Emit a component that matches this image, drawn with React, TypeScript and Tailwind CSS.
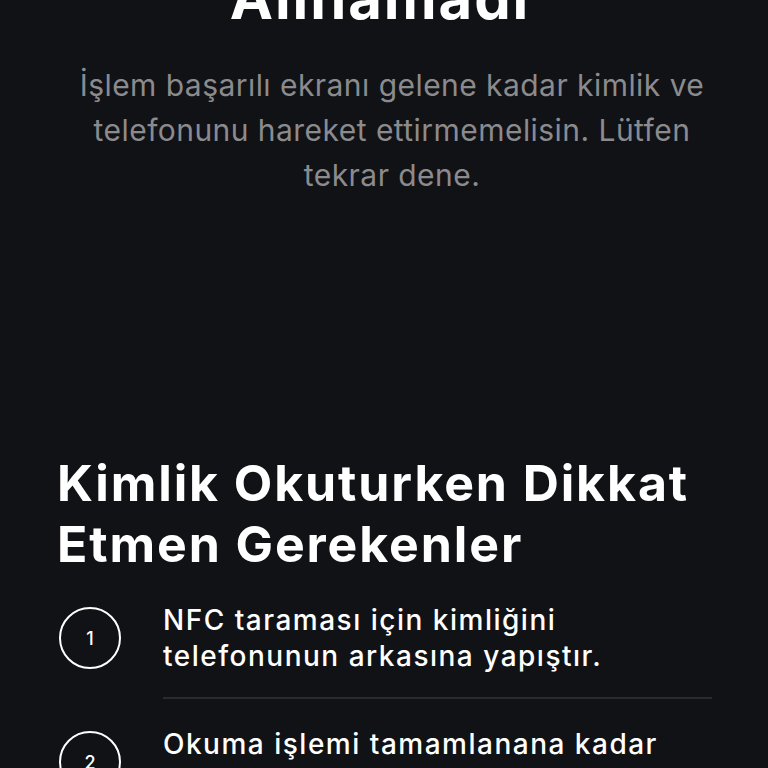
import React from "react";

const items = [
  "NFC taraması için kimliğini telefonunun arkasına yapıştır.",
  "Okuma işlemi tamamlanana kadar kimliğini sabit tut.",
  "Kimliğinin kılıfını çıkar.",
];

export default function App() {
  return (
    <div className="min-h-screen overflow-hidden bg-[#111216] font-['Inter','Noto_Sans',sans-serif] text-white">
      <div className="pl-[48px] pr-[56px]">
        <h1 className="-mt-[35px] text-center text-[58px] font-bold leading-[66px] tracking-[1.9px] text-white">
          Alınamadı
        </h1>
      </div>
      <div className="pl-[72px] pr-[56px]">
        <p className="mt-[32px] text-center text-[30px] font-normal leading-[45px] tracking-[0.45px] text-[#8b8b8e]">
          İşlem başarılı ekranı gelene kadar kimlik ve telefonunu hareket ettirmemelisin. Lütfen tekrar dene.
        </p>
      </div>
      <div className="pl-[57px] pr-[56px]">
        <h2 className="mt-[255px] text-[50px] font-bold leading-[61px] tracking-[1.9px] text-white">
          Kimlik Okuturken Dikkat Etmen Gerekenler
        </h2>
        <ol className="mt-[27px] pl-[2px]">
          {items.map((t, i) => (
            <li key={i}>
              {i > 0 && <div className="mb-[27px] ml-[104px] mt-[23px] h-[2px] bg-[#2a2b2f]" />}
              <div className="flex items-start gap-[42px]">
                <div className="mt-[5px] flex h-[62px] w-[62px] shrink-0 items-center justify-center rounded-full border-2 border-white text-[18px] font-medium">
                  {i + 1}
                </div>
                <div className="text-[28px] font-medium leading-[36px] tracking-[1.5px] text-white">{t}</div>
              </div>
            </li>
          ))}
        </ol>
      </div>
    </div>
  );
}
